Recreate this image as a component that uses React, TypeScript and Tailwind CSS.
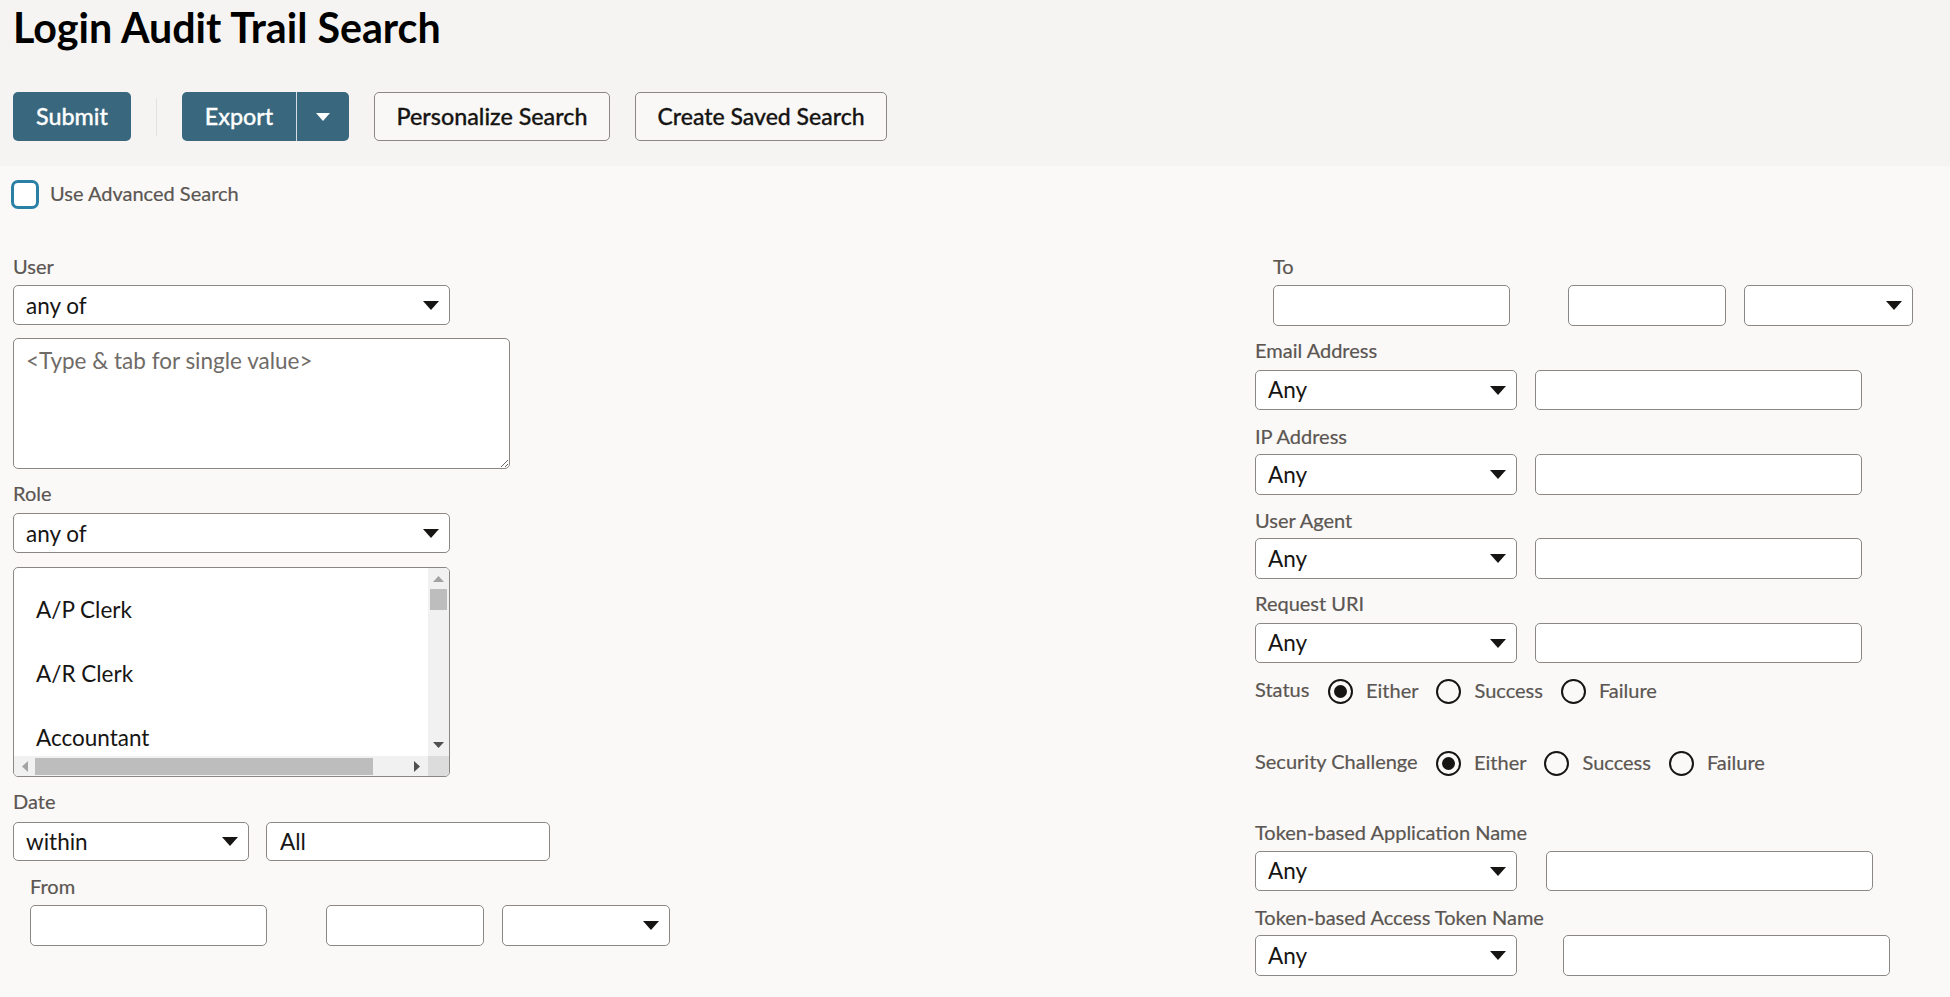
import type { ReactNode } from "react";

const FONT = "font-['Lato','Noto_Sans',sans-serif]";

function Arrow() {
  return (
    <svg width="16" height="9" viewBox="0 0 16 9" className="shrink-0">
      <path d="M0 0h16L8 9z" fill="#161513" />
    </svg>
  );
}

function Label({ children, className = "" }: { children: ReactNode; className?: string }) {
  return <div className={`h-[22px] text-[20px] leading-[21px] text-[#5b5652] [-webkit-text-stroke:0.2px_#5b5652] ${className}`}>{children}</div>;
}

function Select({ value, className = "" }: { value?: string; className?: string }) {
  return (
    <div className={`flex items-center justify-between rounded-[5px] border border-[#8b8784] bg-white pl-[12px] pr-[10px] text-[22.5px] text-[#161513] ${className}`}>
      <span>{value}</span>
      <Arrow />
    </div>
  );
}

function Input({ value, className = "" }: { value?: string; className?: string }) {
  return (
    <input
      readOnly
      value={value ?? ""}
      className={`rounded-[5px] border border-[#8b8784] bg-white px-[13px] text-[22.5px] text-[#161513] outline-none ${className}`}
    />
  );
}

function Radio({ label, checked = false }: { label: string; checked?: boolean }) {
  return (
    <div className="flex items-center gap-[13px]">
      <span className="flex h-[25px] w-[25px] items-center justify-center rounded-full border-2 border-[#161513]">
        {checked && <span className="h-[13px] w-[13px] rounded-full bg-[#161513]" />}
      </span>
      <span className="mb-[4px] text-[20px] leading-[22px] text-[#5b5652] [-webkit-text-stroke:0.2px_#5b5652]">{label}</span>
    </div>
  );
}

function AnyRow({
  label,
  gap,
  height,
  inputMargin = "ml-[18px]",
  className = "",
}: {
  label: string;
  gap: string;
  height: string;
  inputMargin?: string;
  className?: string;
}) {
  return (
    <div className={className}>
      <Label>{label}</Label>
      <div className={`flex ${gap}`}>
        <Select value="Any" className={`${height} w-[262px]`} />
        <Input className={`${height} w-[327px] ${inputMargin}`} />
      </div>
    </div>
  );
}

function RoleList() {
  return (
    <div className="mt-[14px] flex h-[210px] w-[437px] flex-col overflow-hidden rounded-[5px] border border-[#8b8784] bg-white">
      <div className="flex h-[188px]">
        <div className="flex flex-1 flex-col gap-[38px] overflow-hidden pl-[22px] pt-[29px] text-[22.5px] leading-[26px] text-[#161513]">
          <div>A/P Clerk</div>
          <div>A/R Clerk</div>
          <div>Accountant</div>
        </div>
        {/* vertical scrollbar */}
        <div className="flex w-[21px] flex-col items-center bg-[#f1f1f1] pt-[8px]">
          <svg width="11" height="6" viewBox="0 0 11 6"><path d="M0 6h11L5.500 0z" fill="#a3a3a3" /></svg>
          <div className="mt-[7px] h-[21px] w-[17px] bg-[#bdbdbd]" />
          <svg width="11" height="6" viewBox="0 0 11 6" className="mt-auto mb-[8px]"><path d="M0 0h11L5.500 6z" fill="#505050" /></svg>
        </div>
      </div>
      {/* horizontal scrollbar */}
      <div className="flex flex-1 items-center">
        <div className="flex flex-1 items-center self-stretch bg-[#f1f1f1] pl-[8px]">
          <svg width="6" height="11" viewBox="0 0 6 11"><path d="M6 0v11L0 5.500z" fill="#a3a3a3" /></svg>
          <div className="ml-[7px] h-[17px] w-[338px] bg-[#bdbdbd]" />
          <svg width="6" height="11" viewBox="0 0 6 11" className="ml-[41px]"><path d="M0 0v11l6-5.500z" fill="#505050" /></svg>
        </div>
        <div className="w-[21px] self-stretch bg-[#dcdcdc]" />
      </div>
    </div>
  );
}

export default function App() {
  return (
    <div className={`min-h-[997px] bg-[#faf9f7] ${FONT}`}>
      <div className="h-[166px] bg-[#f5f4f2] pl-[13px]">
        <h1 className="pt-[4px] text-[41.2px] font-bold leading-[46px] text-[#000000]">Login Audit Trail Search</h1>
        <div className="mt-[42px] flex items-center text-[23.3px]">
          <button className="h-[49px] w-[118px] rounded-[5px] bg-[#39677d] font-medium text-white [-webkit-text-stroke:0.3px_#fff]">Submit</button>
          <div className="ml-[25px] h-[38px] w-px bg-[#e4e2df]" />
          <div className="ml-[25px] flex h-[49px] w-[167px] overflow-hidden rounded-[5px] bg-[#39677d] text-white">
            <button className="w-[115px] border-r border-[#d5dde2] font-medium [-webkit-text-stroke:0.3px_#fff]">Export</button>
            <div className="flex flex-1 items-center justify-center">
              <svg width="14" height="8" viewBox="0 0 14 8"><path d="M0 0h14L7 8z" fill="#fff" /></svg>
            </div>
          </div>
          <button className="ml-[25px] h-[49px] w-[236px] rounded-[5px] border border-[#8b8784] bg-[#f9f8f6] font-medium text-[#161513] [-webkit-text-stroke:0.3px_#161513]">Personalize Search</button>
          <button className="ml-[25px] h-[49px] w-[252px] rounded-[5px] border border-[#8b8784] bg-[#f9f8f6] text-[23px] font-medium text-[#161513] [-webkit-text-stroke:0.3px_#161513]">Create Saved Search</button>
        </div>
      </div>

      <div className="pl-[13px]">
        <div className="ml-[-2px] flex h-[43px] items-start pt-[14px]">
          <div className="h-[29px] w-[28px] rounded-[7px] border-[3px] border-[#2a7fa5] bg-white" />
          <span className="ml-[11px] text-[20px] leading-[27px] text-[#5b5652] [-webkit-text-stroke:0.2px_#5b5652]">Use Advanced Search</span>
        </div>

        <div className="mt-[47px] flex">
          {/* left column */}
          <div className="w-[1242px]">
            <Label>User</Label>
            <Select value="any of" className="mt-[7px] h-[40px] w-[437px] pt-[1px]" />
            <textarea
              readOnly
              placeholder="<Type & tab for single value>"
              className="mt-[13px] block h-[131px] w-[497px] rounded-[5px] border border-[#8b8784] bg-white px-[12px] py-[5px] text-[22.5px] text-[#161513] outline-none placeholder:text-[#6f6b67]"
            />
            <Label className="mt-[14px]">Role</Label>
            <Select value="any of" className="mt-[8px] h-[40px] w-[437px] pt-[1px]" />
            <RoleList />
            <Label className="mt-[14px]">Date</Label>
            <div className="mt-[9px] flex">
              <Select value="within" className="h-[39px] w-[236px]" />
              <Input value="All" className="ml-[17px] h-[39px] w-[284px]" />
            </div>
            <div className="ml-[17px] mt-[15px]">
              <Label>From</Label>
              <div className="mt-[7px] flex">
                <Input className="h-[41px] w-[237px]" />
                <Input className="ml-[59px] h-[41px] w-[158px]" />
                <Select className="ml-[18px] h-[41px] w-[168px]" />
              </div>
            </div>
          </div>

          {/* right column */}
          <div className="flex-1">
            <div className="ml-[18px]">
              <Label>To</Label>
              <div className="mt-[7px] flex">
                <Input className="h-[41px] w-[237px]" />
                <Input className="ml-[58px] h-[41px] w-[158px]" />
                <Select className="ml-[18px] h-[41px] w-[169px]" />
              </div>
            </div>
            <AnyRow label="Email Address" gap="mt-[8px]" height="h-[40px]" className="mt-[14px]" />
            <AnyRow label="IP Address" gap="mt-[6px]" height="h-[41px]" className="mt-[16px]" />
            <AnyRow label="User Agent" gap="mt-[6px]" height="h-[41px]" className="mt-[15px]" />
            <AnyRow label="Request URI" gap="mt-[8px]" height="h-[40px]" className="mt-[14px]" />

            <div className="mt-[16px] flex h-[25px] items-center">
              <span className="mb-[6px] w-[73px] text-[20px] leading-[22px] text-[#5b5652] [-webkit-text-stroke:0.2px_#5b5652]">Status</span>
              <div className="flex gap-[18px]">
                <Radio label="Either" checked />
                <Radio label="Success" />
                <Radio label="Failure" />
              </div>
            </div>
            <div className="mt-[47px] flex h-[25px] items-center">
              <span className="mb-[6px] w-[181px] text-[20px] leading-[22px] text-[#5b5652] [-webkit-text-stroke:0.2px_#5b5652]">Security Challenge</span>
              <div className="flex gap-[18px]">
                <Radio label="Either" checked />
                <Radio label="Success" />
                <Radio label="Failure" />
              </div>
            </div>

            <AnyRow label="Token-based Application Name" gap="mt-[7px]" height="h-[40px]" inputMargin="ml-[29px]" className="mt-[46px]" />
            <AnyRow label="Token-based Access Token Name" gap="mt-[6px]" height="h-[41px]" inputMargin="ml-[46px]" className="mt-[16px]" />
          </div>
        </div>
      </div>
    </div>
  );
}
